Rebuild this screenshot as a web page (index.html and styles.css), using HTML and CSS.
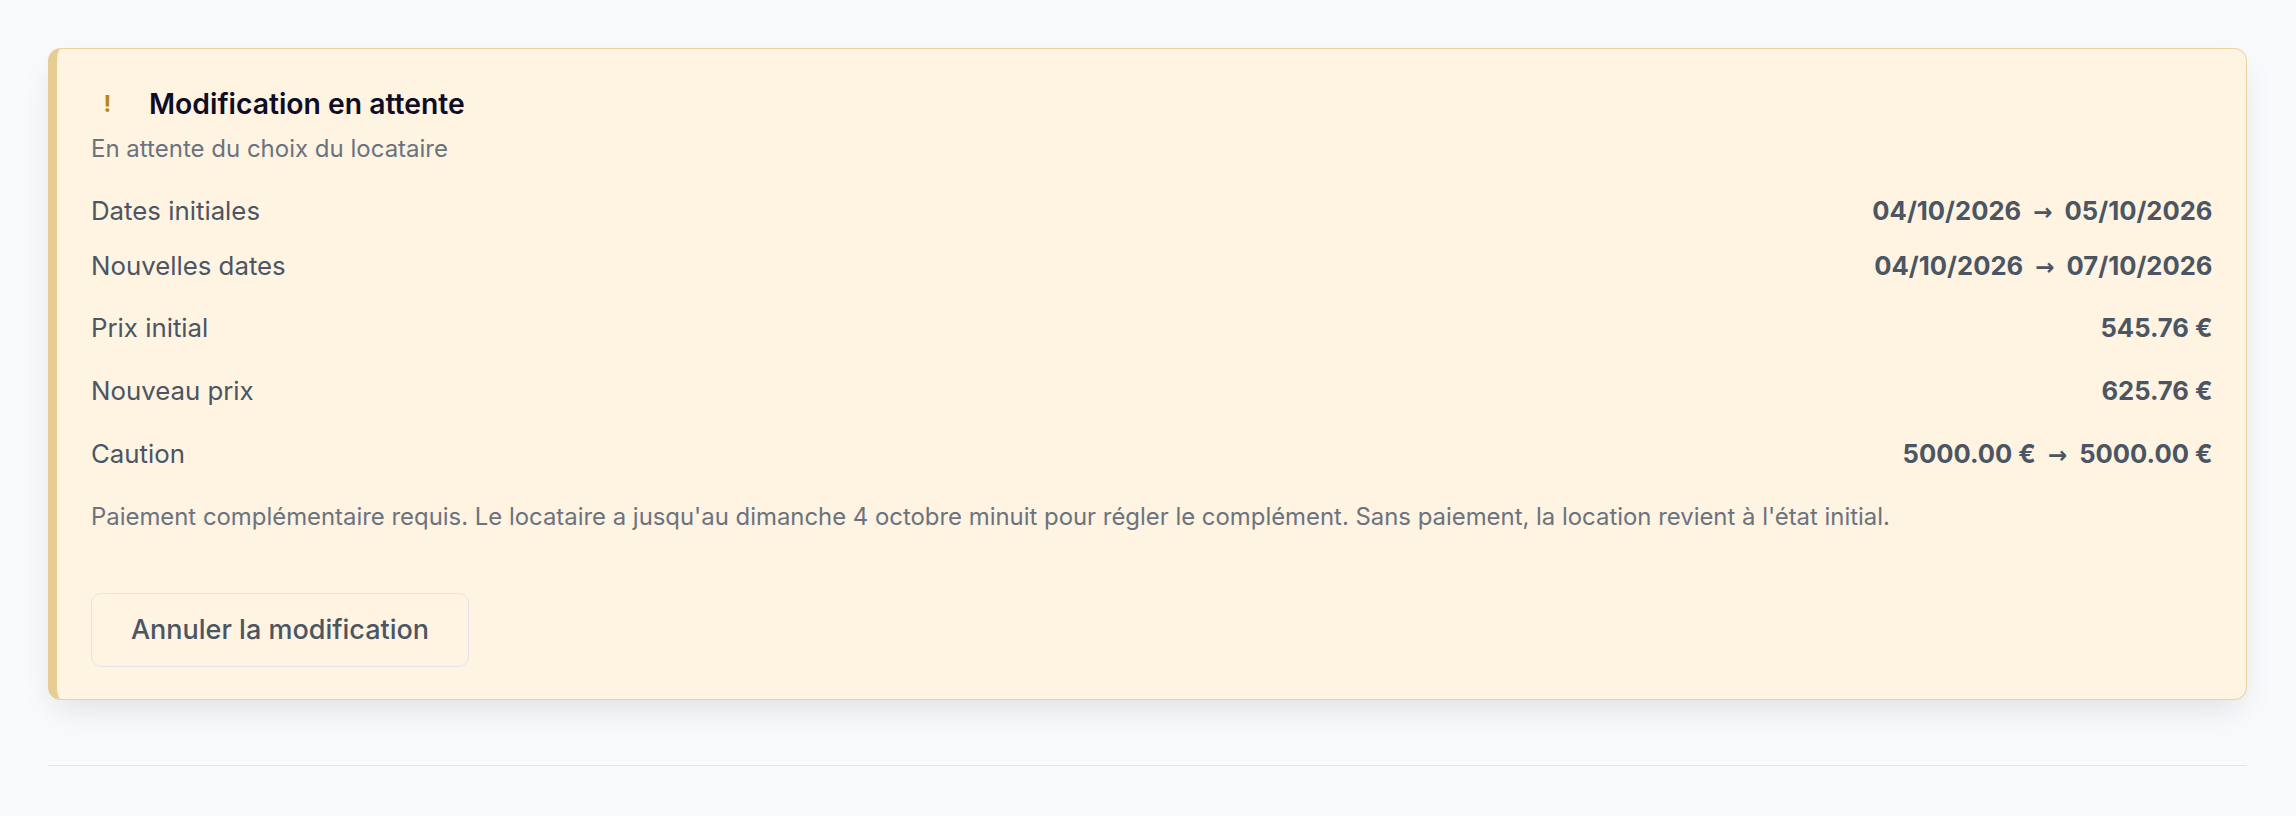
FILE: index.html
```html
<!DOCTYPE html>
<html lang="fr">
<head>
    <meta charset="UTF-8">
    <meta name="viewport" content="width=device-width, initial-scale=1.0">
    <title>Modification en attente</title>
    <link rel="stylesheet" href="styles.css">
</head>
<body>
    <main class="page">
        <section class="pending-card">
            <div class="pending-head">
                <span class="pending-icon">!</span>
                <h2 class="pending-title">Modification en attente</h2>
            </div>
            <p class="pending-sub">En attente du choix du locataire</p>

            <div class="rows">
                <div class="row tight">
                    <span class="row-label">Dates initiales</span>
                    <span class="row-value">04/10/2026 <span class="arrow">→</span> 05/10/2026</span>
                </div>
                <div class="row tight">
                    <span class="row-label">Nouvelles dates</span>
                    <span class="row-value">04/10/2026 <span class="arrow">→</span> 07/10/2026</span>
                </div>
                <div class="row first-price">
                    <span class="row-label">Prix initial</span>
                    <span class="row-value">545.76 €</span>
                </div>
                <div class="row">
                    <span class="row-label">Nouveau prix</span>
                    <span class="row-value">625.76 €</span>
                </div>
                <div class="row">
                    <span class="row-label">Caution</span>
                    <span class="row-value">5000.00 € <span class="arrow">→</span> 5000.00 €</span>
                </div>
            </div>

            <p class="pending-note">Paiement complémentaire requis. Le locataire a jusqu'au dimanche 4 octobre minuit pour régler le complément. Sans paiement, la location revient à l'état initial.</p>

            <button class="btn-cancel" type="button">Annuler la modification</button>
        </section>

        <hr class="divider">
    </main>
</body>
</html>
```

FILE: styles.css
```css
*{
    margin: 0;
    padding: 0;
    box-sizing: border-box;
}
body{
    background: #f9fafb;
    font-family: Inter, "Noto Sans", sans-serif;
    color: #4b5563;
}
.page{
    padding: 48px 49px 0 48px;
}
.pending-card{
    background: #fef4e1;
    border: 1.5px solid #ebd39c;
    border-left: 9px solid #e7cd93;
    border-radius: 13px;
    padding: 36.5px 33.5px 32.5px 34px;
    box-shadow: 0 14px 34px -8px rgba(17, 24, 39, 0.13);
}
.pending-head{
    display: flex;
    align-items: center;
    height: 36px;
}
.pending-icon{
    width: 33px;
    text-align: center;
    margin-right: 25px;
    font-size: 23px;
    font-weight: 700;
    color: #b7860f;
}
.pending-title{
    font-size: 28.3px;
    font-weight: 600;
    color: #0f0c26;
    line-height: 36px;
}
.pending-sub{
    margin-top: 12px;
    font-size: 24px;
    line-height: 30px;
    color: #6b7280;
}
.rows{
    margin-top: 19.5px;
}
.row{
    display: flex;
    justify-content: space-between;
    align-items: center;
    height: 63px;
    font-size: 25.8px;
}
.row.tight{
    height: 55px;
}
.row.first-price{
    margin-top: 3px;
}
.row-label{
    color: #4b5563;
}
.row-value{
    font-size: 25.6px;
    font-weight: 700;
    color: #4b5563;
}
.arrow{
    font-family: "DejaVu Sans", sans-serif;
    font-weight: 700;
    font-size: 23px;
    margin: 0 6px;
}
.pending-note{
    margin-top: 16.5px;
    font-size: 23.9px;
    line-height: 30px;
    color: #6b7280;
}
.btn-cancel{
    margin-top: 61px;
    width: 378px;
    height: 74px;
    background: transparent;
    border: 1.5px solid #e2e5ec;
    border-radius: 10px;
    font-family: inherit;
    font-size: 27px;
    font-weight: 500;
    color: #4b5563;
}
.divider{
    margin-top: 65px;
    border: none;
    border-top: 1.5px solid #e3e5e9;
}
```
